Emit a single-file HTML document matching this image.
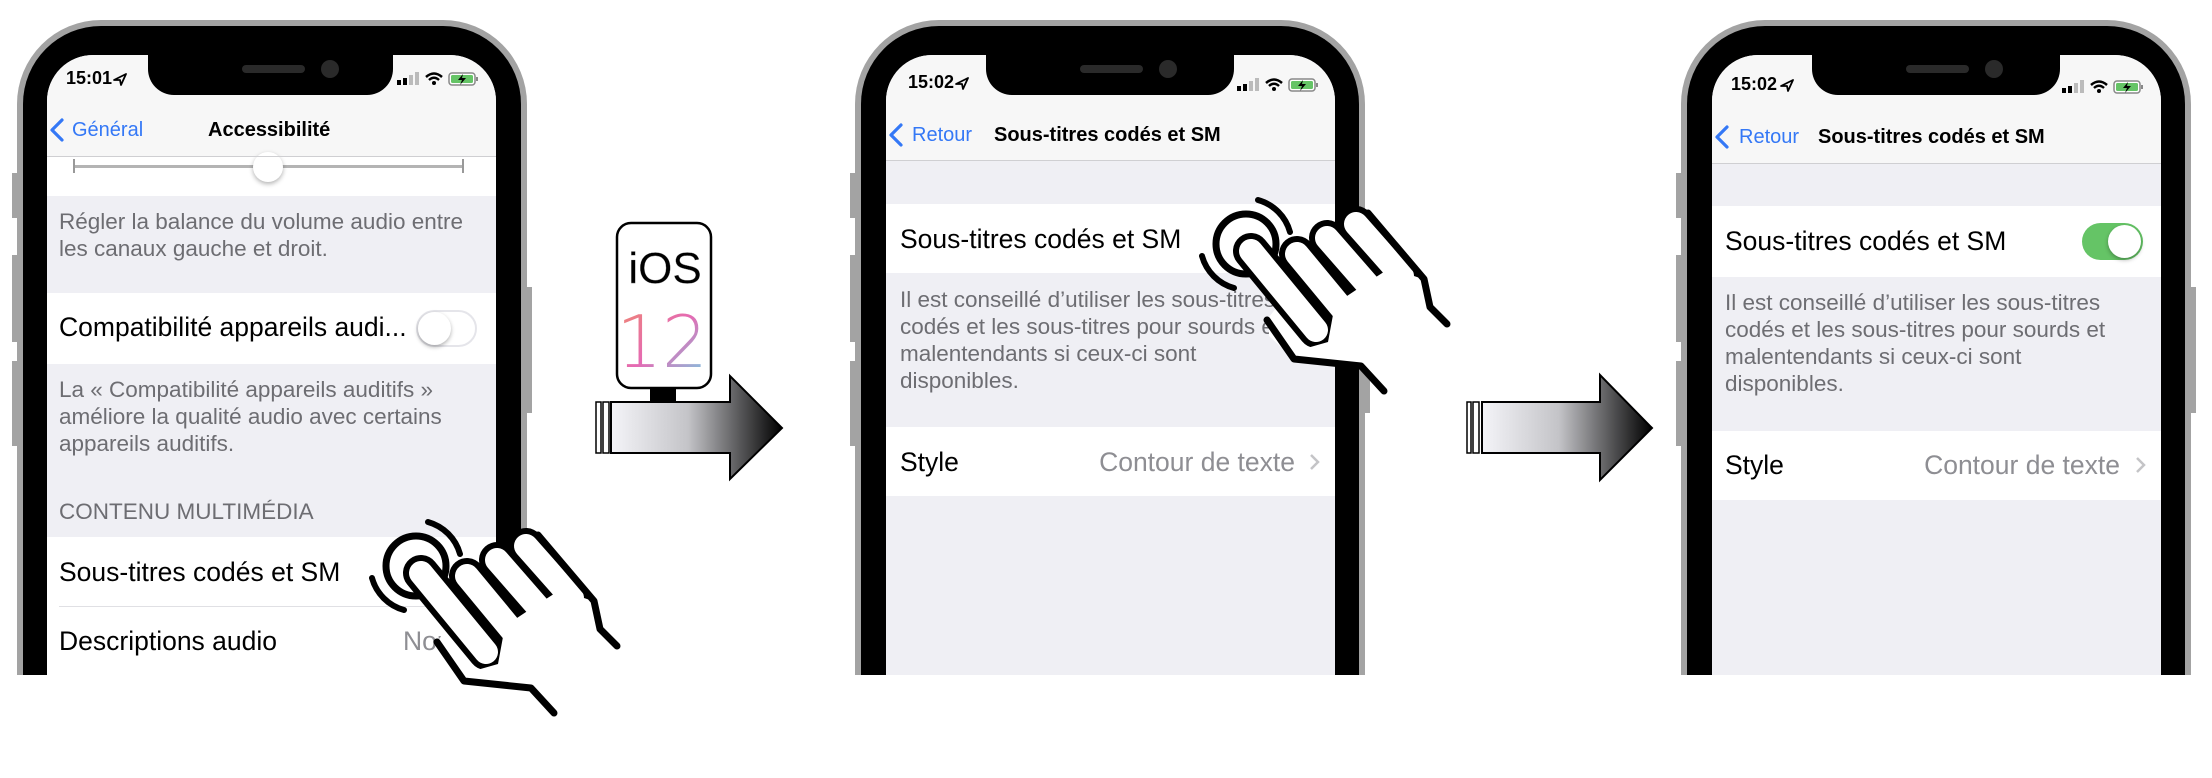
<!DOCTYPE html>
<html><head><meta charset="utf-8">
<style>
*{margin:0;padding:0;box-sizing:border-box}
html,body{width:2212px;height:778px;background:#fff;overflow:hidden;font-family:"Liberation Sans",sans-serif}
.phone{position:absolute;top:0;width:520px;height:675px;overflow:hidden}
.frame{position:absolute;left:5px;top:20px;width:510px;height:700px;background:#a3a3a3;border-radius:84px 84px 0 0}
.black{position:absolute;left:11px;top:26px;width:498px;height:700px;background:#000;border-radius:78px 78px 0 0}
.btn{position:absolute;background:#a3a3a3;width:8px}
.screen{position:absolute;left:35px;top:55px;width:449px;height:640px;background:#efeff4;border-radius:46px 46px 0 0;overflow:hidden}
.notch{position:absolute;top:-2px;height:42px;background:#000;border-radius:0 0 26px 26px}
.spk{position:absolute;left:94px;top:12px;width:63px;height:8px;background:#2a2a2a;border-radius:4px}
.cam{position:absolute;left:173px;top:7px;width:18px;height:18px;background:#2a2a2a;border-radius:50%}
.nav{position:absolute;left:0;top:0;width:100%;background:#f7f7f7;border-bottom:1px solid #cfcfd2}
.abs{position:absolute;white-space:nowrap}
.time{font-weight:bold;font-size:18px;color:#000}
.blue{color:#3478f6;font-size:20px}
.title{font-weight:bold;font-size:20px;color:#000}
.row{position:absolute;left:0;width:100%;background:#fff}
.body{font-size:26.5px;color:#000}
.foot{font-size:22.5px;color:#6d6d72;line-height:27px}
.tog{position:absolute;width:61px;height:37px;border-radius:19px}
.knob{position:absolute;top:2px;width:33px;height:33px;border-radius:50%;background:#fff;box-shadow:0 2px 4px rgba(0,0,0,.3)}
</style></head><body>

<!-- PHONE 1 -->
<div class="phone" style="left:12px">
  <div class="btn" style="left:0;top:173px;height:45px"></div>
  <div class="btn" style="left:0;top:255px;height:87px"></div>
  <div class="btn" style="left:0;top:361px;height:85px"></div>
  <div class="btn" style="left:512px;top:287px;height:126px"></div>
  <div class="frame"></div><div class="black"></div>
  <div class="screen">
    <div class="nav" style="height:102px"></div>
    <div class="row" style="top:102px;height:39px"></div>
    <div class="abs" style="left:27px;top:110px;width:389px;height:3px;background:#b4b4b4"></div>
    <div class="abs" style="left:26px;top:104px;width:2px;height:14px;background:#999"></div>
    <div class="abs" style="left:415px;top:104px;width:2px;height:14px;background:#999"></div>
    <div class="abs" style="left:206px;top:97px;width:30px;height:30px;border-radius:50%;background:#fff;box-shadow:0 2px 5px rgba(0,0,0,.3)"></div>
    <div class="nav" style="height:102px;background:transparent"></div>
    <div class="abs foot" style="left:12px;top:153px">Régler la balance du volume audio entre<br>les canaux gauche et droit.</div>
    <div class="row" style="top:238px;height:71px"></div>
    <div class="abs body" style="left:12px;top:257px">Compatibilité appareils audi...</div>
    <div class="tog" style="left:369px;top:255px;background:#fff;border:2px solid #e5e5ea"><div class="knob" style="left:0;top:0"></div></div>
    <div class="abs foot" style="left:12px;top:321px">La « Compatibilité appareils auditifs »<br>améliore la qualité audio avec certains<br>appareils auditifs.</div>
    <div class="abs foot" style="left:12px;top:443px">CONTENU MULTIMÉDIA</div>
    <div class="row" style="top:482px;height:140px"></div>
    <div class="abs" style="left:12px;top:551px;width:437px;height:1px;background:#e0e0e4"></div>
    <div class="abs body" style="left:12px;top:502px">Sous-titres codés et SM</div>
    <div class="abs body" style="left:12px;top:571px">Descriptions audio</div>
    <div class="abs body" style="left:356px;top:571px;color:#8e8e93">Non</div>
  </div>
  <div class="notch" style="left:136px;top:53px;width:245px"><div class="spk"></div><div class="cam"></div></div>
</div>

<!-- PHONE 2 -->
<div class="phone" style="left:850px">
  <div class="btn" style="left:0;top:173px;height:45px"></div>
  <div class="btn" style="left:0;top:255px;height:87px"></div>
  <div class="btn" style="left:0;top:361px;height:85px"></div>
  <div class="btn" style="left:512px;top:287px;height:126px"></div>
  <div class="frame"></div><div class="black"></div>
  <div class="screen" style="left:36px">
    <div class="nav" style="height:106px"></div>
    <div class="row" style="top:149px;height:69px"></div>
    <div class="abs body" style="left:14px;top:169px">Sous-titres codés et SM</div>
    <div class="abs foot" style="left:14px;top:231px">Il est conseillé d’utiliser les sous-titres<br>codés et les sous-titres pour sourds et<br>malentendants si ceux-ci sont<br>disponibles.</div>
    <div class="row" style="top:372px;height:69px"></div>
    <div class="abs body" style="left:14px;top:392px">Style</div>
    <div class="abs body" style="right:40px;top:392px;color:#8e8e93">Contour de texte</div>
  </div>
  <div class="notch" style="left:136px;top:53px;width:248px"><div class="spk"></div><div class="cam"></div></div>
</div>

<!-- PHONE 3 -->
<div class="phone" style="left:1676px">
  <div class="btn" style="left:0;top:173px;height:45px"></div>
  <div class="btn" style="left:0;top:255px;height:87px"></div>
  <div class="btn" style="left:0;top:361px;height:85px"></div>
  <div class="btn" style="left:512px;top:287px;height:126px"></div>
  <div class="frame"></div><div class="black"></div>
  <div class="screen" style="left:36px">
    <div class="nav" style="height:109px"></div>
    <div class="row" style="top:151px;height:71px"></div>
    <div class="abs body" style="left:13px;top:171px">Sous-titres codés et SM</div>
    <div class="tog" style="left:370px;top:168px;background:#65c466"><div class="knob" style="left:26px"></div></div>
    <div class="abs foot" style="left:13px;top:234px">Il est conseillé d’utiliser les sous-titres<br>codés et les sous-titres pour sourds et<br>malentendants si ceux-ci sont<br>disponibles.</div>
    <div class="row" style="top:376px;height:69px"></div>
    <div class="abs body" style="left:13px;top:395px">Style</div>
    <div class="abs body" style="right:41px;top:395px;color:#8e8e93">Contour de texte</div>
  </div>
  <div class="notch" style="left:136px;top:53px;width:248px"><div class="spk"></div><div class="cam"></div></div>
</div>

<!-- text overlays (status/nav) -->
<div class="abs time" style="left:66px;top:68px">15:01</div>
<div class="abs blue" style="left:72px;top:119px">Général</div>
<div class="abs title" style="left:208px;top:119px">Accessibilité</div>

<div class="abs time" style="left:908px;top:72px">15:02</div>
<div class="abs blue" style="left:912px;top:124px">Retour</div>
<div class="abs title" style="left:994px;top:124px">Sous-titres codés et SM</div>

<div class="abs time" style="left:1731px;top:74px">15:02</div>
<div class="abs blue" style="left:1739px;top:126px">Retour</div>
<div class="abs title" style="left:1818px;top:126px">Sous-titres codés et SM</div>

<svg class="abs" style="left:0;top:0" width="2212" height="778" viewBox="0 0 2212 778">
  <defs>
    <linearGradient id="ag" x1="0" x2="1" y1="0" y2="0">
      <stop offset="0" stop-color="#f4f4f8"/><stop offset="0.45" stop-color="#c4c4c8"/><stop offset="1" stop-color="#000"/>
    </linearGradient>
    <linearGradient id="g12" x1="0" x2="1" y1="0" y2="1">
      <stop offset="0" stop-color="#f08a6a"/><stop offset="0.5" stop-color="#e56ab3"/><stop offset="1" stop-color="#6ed4e8"/>
    </linearGradient>
    <g id="status">
      <rect x="0" y="80" width="4" height="5" fill="#000"/><rect x="6" y="78" width="4" height="7" fill="#000"/>
      <rect x="12" y="75" width="4" height="10" fill="#bbb"/><rect x="18" y="72" width="4" height="13" fill="#bbb"/>
      <path d="M29 77 Q37 70 45 77 M32 80 Q37 75.5 42 80" stroke="#000" stroke-width="2.5" fill="none"/>
      <circle cx="37" cy="83" r="2" fill="#000"/>
      <rect x="52" y="73" width="26" height="12" rx="3" fill="#fff" stroke="#888" stroke-width="1.5"/>
      <rect x="54" y="75" width="22" height="8" rx="1.5" fill="#65c466"/>
      <rect x="79" y="77" width="2" height="4" fill="#888"/>
      <path d="M66 74 L61 80 H65 L63 85 L69 78 H65 Z" fill="#000"/>
    </g>
    <g id="loc"><path d="M0 8 L12 2 L7 13 L6 8 Z" fill="none" stroke="#000" stroke-width="1.8" stroke-linejoin="round"/></g>
    <g id="chev"><path d="M12 0 L2 10 L12 20" fill="none" stroke="#3478f6" stroke-width="3.2" stroke-linecap="round" stroke-linejoin="round"/></g>
    <g id="hand" stroke-linecap="round" stroke-linejoin="round">
      <polygon points="439,639 470,600 500,575 536,540 594,601 600,629 617,646 600,700 554,713 531,688 464,681 439,658" fill="#fff"/>
      <circle cx="416" cy="566" r="30" fill="none" stroke="#000" stroke-width="7"/>
      <path d="M428 522 A46 46 0 0 1 460 554 M404 610 A46 46 0 0 1 372 578" fill="none" stroke="#000" stroke-width="6"/>
      <line x1="526" y1="546" x2="572" y2="598" stroke="#000" stroke-width="36"/>
      <line x1="526" y1="546" x2="572" y2="598" stroke="#fff" stroke-width="24"/>
      <line x1="497" y1="560" x2="545" y2="615" stroke="#000" stroke-width="36"/>
      <line x1="497" y1="560" x2="545" y2="615" stroke="#fff" stroke-width="24"/>
      <line x1="467" y1="576" x2="515" y2="634" stroke="#000" stroke-width="36"/>
      <line x1="467" y1="576" x2="515" y2="634" stroke="#fff" stroke-width="24"/>
      <line x1="421" y1="573" x2="486" y2="652" stroke="#000" stroke-width="36"/>
      <line x1="421" y1="573" x2="486" y2="652" stroke="#fff" stroke-width="24"/>
      <polygon points="470,672 498,664 505,626 532,608 560,590 590,600 600,629 612,650 600,700 554,705 531,684" fill="#fff"/>
      <polyline points="437,642 464,681 531,688 554,713" fill="none" stroke="#000" stroke-width="7"/>
      <polyline points="538,535 594,601 600,629 617,646" fill="none" stroke="#000" stroke-width="7"/>
    </g>
  </defs>

  <use href="#status" x="397" y="0"/>
  <use href="#status" x="1237" y="6"/>
  <use href="#status" x="2062" y="8"/>
  <use href="#loc" x="114" y="72"/>
  <use href="#loc" x="956" y="76"/>
  <use href="#loc" x="1781" y="78"/>
  <use href="#chev" x="50" y="120"/>
  <use href="#chev" x="889" y="125"/>
  <use href="#chev" x="1715" y="127"/>
  <path d="M1311 455 L1318 462 L1311 469" fill="none" stroke="#c4c4c7" stroke-width="2.5"/>
  <path d="M2137 458 L2144 465 L2137 472" fill="none" stroke="#c4c4c7" stroke-width="2.5"/>

  <!-- iOS box + arrow 1 -->
  <rect x="617" y="223" width="94" height="165" rx="14" fill="#fff" stroke="#000" stroke-width="2.5"/>
  <text x="665" y="283" text-anchor="middle" font-family="Liberation Sans,sans-serif" font-size="44" fill="#000" stroke="#999" stroke-width="0.3">iOS</text>
  <text x="662" y="367" text-anchor="middle" font-family="DejaVu Sans,sans-serif" font-weight="200" font-size="72" fill="url(#g12)">12</text>
  <rect x="650" y="388" width="26" height="14" fill="#000"/>
  <rect x="596" y="402" width="5" height="51" fill="#fff" stroke="#000" stroke-width="1.5"/>
  <rect x="603" y="402" width="6" height="51" fill="#fff" stroke="#000" stroke-width="1.5"/>
  <path d="M611 402 H730 V376 L782 428 L730 479 V453 H611 Z" fill="url(#ag)" stroke="#000" stroke-width="2"/>

  <!-- arrow 2 -->
  <rect x="1467" y="402" width="4" height="51" fill="#fff" stroke="#000" stroke-width="1.5"/>
  <rect x="1473" y="402" width="6" height="51" fill="#fff" stroke="#000" stroke-width="1.5"/>
  <path d="M1482 402 H1600 V375 L1652 428 L1600 480 V453 H1482 Z" fill="url(#ag)" stroke="#000" stroke-width="2"/>

  <use href="#hand"/>
  <use href="#hand" transform="translate(830,-322)"/>
</svg>
</body></html>
